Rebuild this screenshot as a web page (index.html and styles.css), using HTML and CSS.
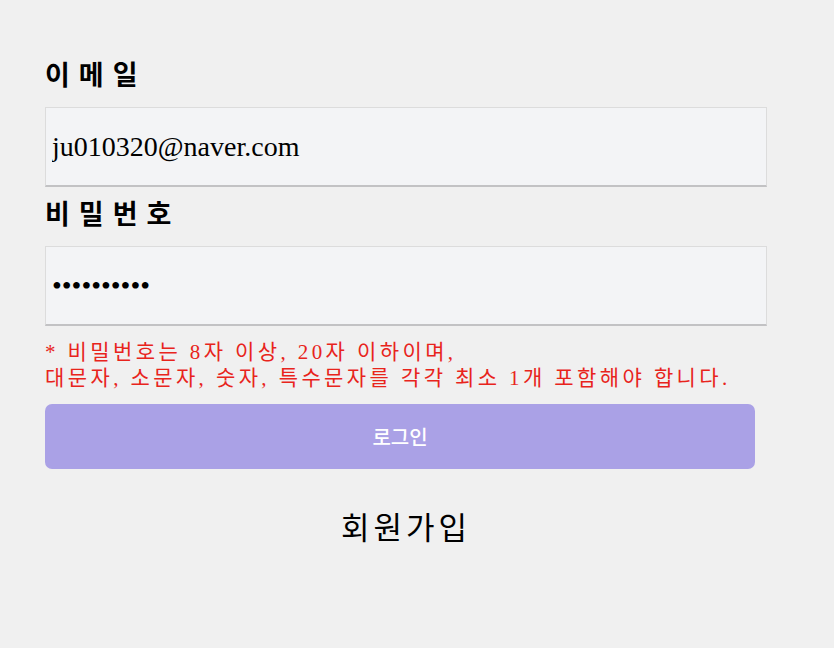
FILE: index.html
```html
<!DOCTYPE html>
<html lang="ko">
<head>
<meta charset="utf-8">
<title>로그인</title>
<link rel="stylesheet" href="styles.css">
</head>
<body>
<form class="login">
  <label class="field-label" for="email">이메일</label>
  <input class="field-input" id="email" type="text" value="ju010320@naver.com">
  <label class="field-label" for="pw">비밀번호</label>
  <input class="field-input field-input--secret" id="pw" type="password" value="abcdefghij">
  <p class="error">* 비밀번호는 8자 이상, 20자 이하이며,<br>대문자, 소문자, 숫자, 특수문자를 각각 최소 1개 포함해야 합니다.</p>
  <button class="login-btn" type="button">로그인</button>
  <div class="signup">회원가입</div>
</form>
</body>
</html>
```

FILE: styles.css
```css
html, body {
  margin: 0;
  padding: 0;
  background: #f0f0f0;
}
body {
  font-family: "Liberation Serif", "Noto Sans CJK KR", serif;
  color: #000;
}
.login {
  width: 710px;
  margin: 0;
  padding: 48px 0 0 45px;
  display: flex;
  flex-direction: column;
  align-items: flex-start;
}
.field-label {
  display: block;
  font-size: 27px;
  font-weight: bold;
  line-height: 30px;
  margin: 13px 0 16px;
  letter-spacing: 9px;
}
.field-input {
  box-sizing: border-box;
  width: 722px;
  height: 80px;
  margin: 0;
  padding: 0 6px;
  background: #f3f4f6;
  border: 1px solid #dcdcdc;
  border-bottom: 2px solid #c2c2c4;
  font-family: "Liberation Serif", "Noto Sans CJK KR", serif;
  font-size: 28px;
  color: #000;
  outline: none;
}
.error {
  margin: 13px 0 0;
  font-size: 21px;
  line-height: 26px;
  letter-spacing: 3.4px;
  color: #e8241c;
}
.login-btn {
  width: 710px;
  height: 65px;
  margin-top: 13px;
  border: none;
  border-radius: 7px;
  background: #aaa1e6;
  color: #fff;
  font-family: "Noto Sans CJK KR", "Noto Sans", sans-serif;
  font-size: 20px;
  font-weight: 500;
  cursor: pointer;
}
.signup {
  align-self: stretch;
  text-align: center;
  margin-top: 42px;
  padding-left: 12px;
  font-size: 31px;
  line-height: 36px;
  letter-spacing: 4px;
}
```
